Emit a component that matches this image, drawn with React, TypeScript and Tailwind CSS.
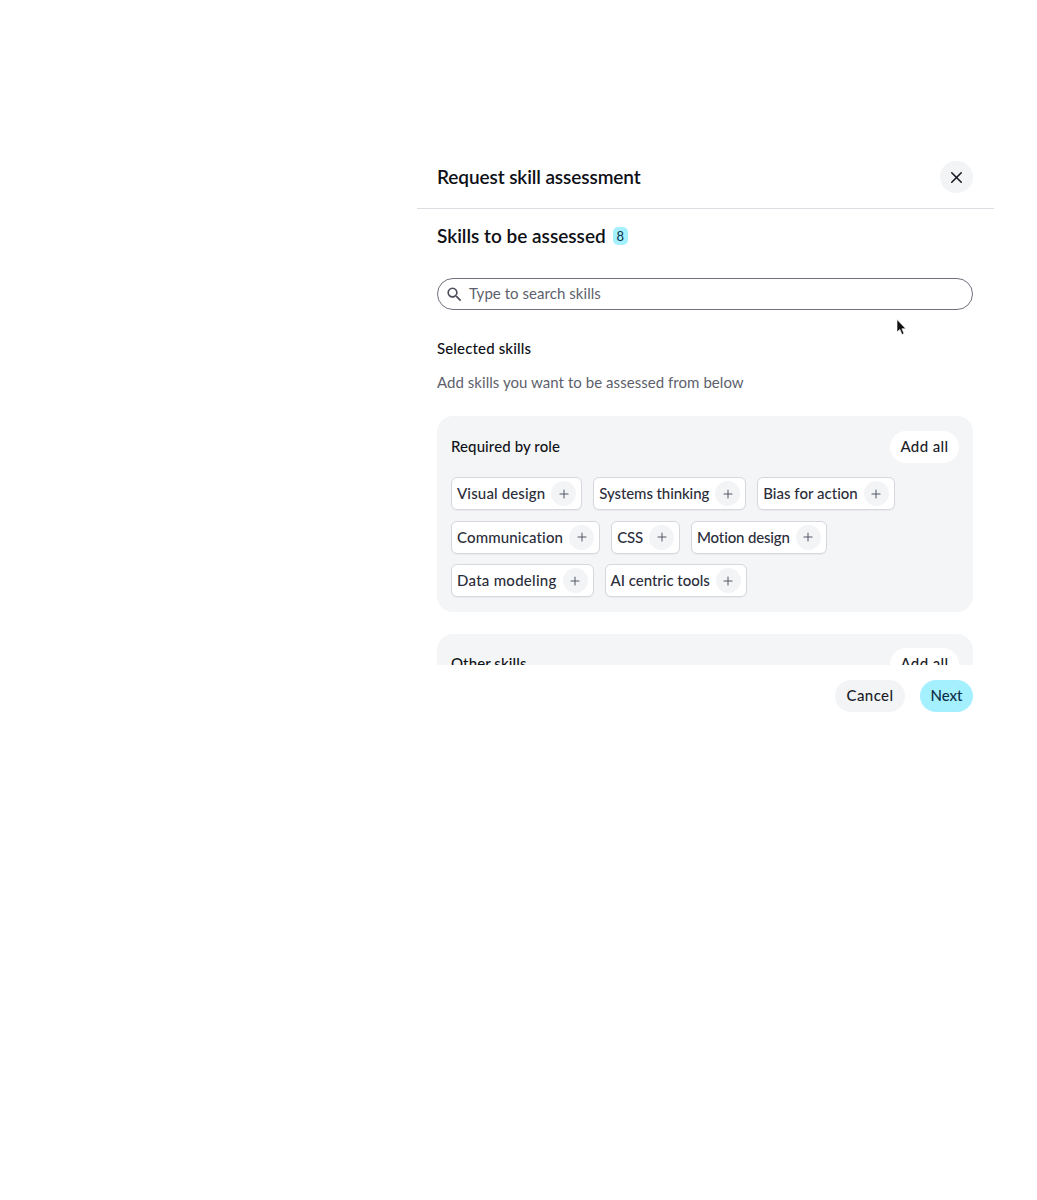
import { Plus, X } from 'lucide-react';
import { MdSearch } from 'react-icons/md';

const requiredSkills = [
  [
    { label: 'Visual design', tracking: 'tracking-[0.15px]' },
    { label: 'Systems thinking', tracking: 'tracking-[-0.1px]' },
    { label: 'Bias for action', tracking: 'tracking-[0.02px]' },
  ],
  [
    { label: 'Communication', tracking: 'tracking-[0.15px]' },
    { label: 'CSS', tracking: 'tracking-[-0.15px]' },
    { label: 'Motion design', tracking: 'tracking-[-0.15px]' },
  ],
  [
    { label: 'Data modeling', tracking: 'tracking-[0.27px]' },
    { label: 'AI centric tools', tracking: 'tracking-[-0.03px]' },
  ],
];

function SkillChip({ label, tracking }: { label: string; tracking: string }) {
  return (
    <div className="flex h-[33px] items-center gap-[6px] rounded-[6px] border border-[#d6d8de] bg-white pl-[5px] pr-[5px] shadow-[0_1px_1px_rgba(0,0,0,0.04)]">
      <span className={`text-[15px] font-medium text-[#2b2d3a] ${tracking}`}>{label}</span>
      <span className="flex h-[25px] w-[25px] items-center justify-center rounded-full bg-[#f3f4f6] text-[#555866]">
        <Plus size={14} strokeWidth={1.75} />
      </span>
    </div>
  );
}

function SectionHeader({ title }: { title: string }) {
  return (
    <div className="flex h-[32px] items-center justify-between">
      <h3 className="pb-[2px] text-[15px] font-medium tracking-[0.1px] text-[#111218]">{title}</h3>
      <button className="h-[32px] w-[69px] rounded-full bg-white pb-[1px] text-[15px] font-medium tracking-[0.4px] text-[#1c1e2a]">Add all</button>
    </div>
  );
}

export default function App() {
  return (
    <div className="relative min-h-[1200px] bg-white pl-[417px] pt-[161px] font-['Lato','Noto_Sans',sans-serif]">
      <div className="w-[577px]">
        {/* Header */}
        <div className="flex items-start justify-between border-b border-[#dcdde3] pb-[15px] pl-[20px] pr-[21px]">
          <h1 className="text-[19px] font-semibold leading-[32px] tracking-[-0.1px] text-[#0e0f16]">Request skill assessment</h1>
          <button className="flex h-[32px] w-[33px] items-center justify-center rounded-full bg-[#f3f4f6] text-[#15161f]">
            <X size={19} strokeWidth={1.9} />
          </button>
        </div>

        <div className="pl-[20px] pr-[21px]">
          <div className="mt-[18px] flex h-[18px] items-center gap-[7px]">
            <h2 className="text-[19px] font-semibold text-[#0e0f16]">Skills to be assessed</h2>
            <span className="flex h-[18px] w-[15px] items-center justify-center rounded-[5px] bg-[#a5f0ff] pt-[1px] text-[13px] text-[#07324a]">8</span>
          </div>

          <div className="mt-[33px] flex h-[32px] items-center gap-[5px] rounded-full border border-[#70727f] pl-[7px]">
            <MdSearch size={19} className="text-[#4b4d5a]" />
            <span className="pb-[1px] text-[15px] tracking-[0.05px] text-[#5d5f6c]">Type to search skills</span>
          </div>

          <h3 className="mt-[29px] text-[15px] font-medium leading-[18px] tracking-[0.15px] text-[#0e0f16]">Selected skills</h3>
          <p className="mt-[16px] text-[15px] leading-[18px] tracking-[0.05px] text-[#5d5f6c]">Add skills you want to be assessed from below</p>

          {/* Scroll area clipped by the footer */}
          <div className="mt-[25px] h-[249px] overflow-hidden">
            <section className="rounded-[16px] bg-[#f4f5f7] pb-[15px] pl-[14px] pr-[14px] pt-[15px]">
              <SectionHeader title="Required by role" />
              <div className="mt-[14px] flex flex-col gap-[10.5px]">
                {requiredSkills.map((row) => (
                  <div key={row[0].label} className="flex gap-[11px]">
                    {row.map((skill) => (
                      <SkillChip key={skill.label} label={skill.label} tracking={skill.tracking} />
                    ))}
                  </div>
                ))}
              </div>
            </section>
            <section className="mt-[22px] rounded-[16px] bg-[#f4f5f7] px-[14px] pb-[15px] pt-[14px]">
              <SectionHeader title="Other skills" />
            </section>
          </div>

          <div className="mt-[15px] flex justify-end gap-[15px]">
            <button className="h-[32px] w-[70px] rounded-full bg-[#f3f4f6] pb-[1px] text-[15px] font-medium tracking-[0.4px] text-[#1c1e2a]">Cancel</button>
            <button className="h-[32px] w-[53px] rounded-full bg-[#a5f0ff] pb-[1px] text-[15px] font-medium text-[#0b2e4a]">Next</button>
          </div>
        </div>
      </div>

      {/* Mouse cursor */}
      <svg className="absolute left-[896px] top-[319px]" width="11" height="17" viewBox="0 0 11 17">
        <path d="M1 0.5V13L3.9 10.4L6 15.5L8 14.6L5.9 9.7H9.8Z" fill="#111" stroke="#fff" strokeWidth="0.6" />
      </svg>
    </div>
  );
}
